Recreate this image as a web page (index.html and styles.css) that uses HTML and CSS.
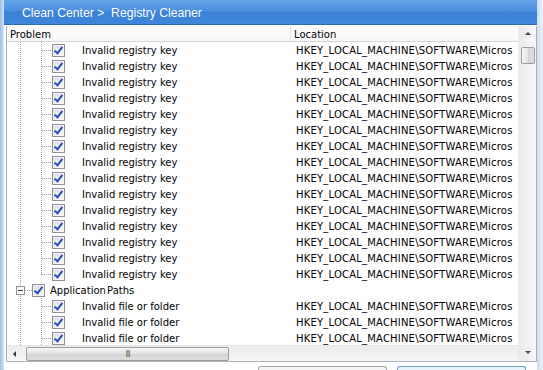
FILE: index.html
```html
<!DOCTYPE html>
<html lang="en">
<head>
    <meta charset="UTF-8">
    <title>Clean Center | Registry Cleaner</title>
    <link rel="stylesheet" href="styles.css">
</head>
<body>
    <div class="screen">
        <div class="edge-left"></div>

        <div class="window">
            <div class="title-bar">Clean Center &gt;&nbsp; Registry Cleaner</div>

            <div class="list-box">
                <div class="list-main">
                    <div class="list-header">
                        <div class="col-problem">Problem</div>
                        <div class="col-location">Location</div>
                    </div>

                    <div class="rows">
                        <div class="row"><div class="tree"><span class="check"></span></div><div class="problem">Invalid registry key</div><div class="location">HKEY_LOCAL_MACHINE\SOFTWARE\Micros</div></div>
                        <div class="row"><div class="tree"><span class="check"></span></div><div class="problem">Invalid registry key</div><div class="location">HKEY_LOCAL_MACHINE\SOFTWARE\Micros</div></div>
                        <div class="row"><div class="tree"><span class="check"></span></div><div class="problem">Invalid registry key</div><div class="location">HKEY_LOCAL_MACHINE\SOFTWARE\Micros</div></div>
                        <div class="row"><div class="tree"><span class="check"></span></div><div class="problem">Invalid registry key</div><div class="location">HKEY_LOCAL_MACHINE\SOFTWARE\Micros</div></div>
                        <div class="row"><div class="tree"><span class="check"></span></div><div class="problem">Invalid registry key</div><div class="location">HKEY_LOCAL_MACHINE\SOFTWARE\Micros</div></div>
                        <div class="row"><div class="tree"><span class="check"></span></div><div class="problem">Invalid registry key</div><div class="location">HKEY_LOCAL_MACHINE\SOFTWARE\Micros</div></div>
                        <div class="row"><div class="tree"><span class="check"></span></div><div class="problem">Invalid registry key</div><div class="location">HKEY_LOCAL_MACHINE\SOFTWARE\Micros</div></div>
                        <div class="row"><div class="tree"><span class="check"></span></div><div class="problem">Invalid registry key</div><div class="location">HKEY_LOCAL_MACHINE\SOFTWARE\Micros</div></div>
                        <div class="row"><div class="tree"><span class="check"></span></div><div class="problem">Invalid registry key</div><div class="location">HKEY_LOCAL_MACHINE\SOFTWARE\Micros</div></div>
                        <div class="row"><div class="tree"><span class="check"></span></div><div class="problem">Invalid registry key</div><div class="location">HKEY_LOCAL_MACHINE\SOFTWARE\Micros</div></div>
                        <div class="row"><div class="tree"><span class="check"></span></div><div class="problem">Invalid registry key</div><div class="location">HKEY_LOCAL_MACHINE\SOFTWARE\Micros</div></div>
                        <div class="row"><div class="tree"><span class="check"></span></div><div class="problem">Invalid registry key</div><div class="location">HKEY_LOCAL_MACHINE\SOFTWARE\Micros</div></div>
                        <div class="row"><div class="tree"><span class="check"></span></div><div class="problem">Invalid registry key</div><div class="location">HKEY_LOCAL_MACHINE\SOFTWARE\Micros</div></div>
                        <div class="row"><div class="tree"><span class="check"></span></div><div class="problem">Invalid registry key</div><div class="location">HKEY_LOCAL_MACHINE\SOFTWARE\Micros</div></div>
                        <div class="row last"><div class="tree"><span class="check"></span></div><div class="problem">Invalid registry key</div><div class="location">HKEY_LOCAL_MACHINE\SOFTWARE\Micros</div></div>

                        <div class="row group"><div class="tree"><span class="toggle"></span><span class="check"></span></div><div class="problem">Application Paths</div><div class="location"></div></div>

                        <div class="row"><div class="tree"><span class="check"></span></div><div class="problem">Invalid file or folder</div><div class="location">HKEY_LOCAL_MACHINE\SOFTWARE\Micros</div></div>
                        <div class="row"><div class="tree"><span class="check"></span></div><div class="problem">Invalid file or folder</div><div class="location">HKEY_LOCAL_MACHINE\SOFTWARE\Micros</div></div>
                        <div class="row"><div class="tree"><span class="check"></span></div><div class="problem">Invalid file or folder</div><div class="location">HKEY_LOCAL_MACHINE\SOFTWARE\Micros</div></div>
                    </div>

                    <div class="hscroll">
                        <span class="arrow-left"></span>
                        <div class="hthumb">III</div>
                    </div>
                </div>

                <div class="vscroll">
                    <span class="arrow-up"></span>
                    <div class="vthumb"></div>
                    <div class="vtrack"></div>
                    <span class="arrow-down"></span>
                </div>
            </div>

            <div class="buttons">
                <span class="btn"></span>
                <span class="btn btn-main"></span>
            </div>
        </div>

        <div class="edge-right"></div>
    </div>
</body>
</html>
```

FILE: styles.css
```css
body {
    margin: 0;
    background: #fff;
    font-family: "DejaVu Sans", Verdana, sans-serif;
    font-size: 10px;
    color: #000;
    overflow: hidden;
}

.screen {
    display: flex;
    height: 370px;
    overflow: hidden;
}

.edge-left {
    width: 4px;
    background: linear-gradient(to right, #9dbde4, #d4e4f5);
}

.edge-right {
    flex: 1;
    background: linear-gradient(to right, #c9dcf1, #eef4fb);
}

.window {
    width: 533px;
    height: 370px;
    overflow: hidden;
    display: flex;
    flex-direction: column;
    background: #fff;
}

.title-bar {
    height: 25px;
    line-height: 27px;
    padding-left: 18px;
    font-family: "Liberation Sans", Arial, sans-serif;
    font-size: 12.2px;
    color: #fff;
    background: linear-gradient(#66a6ea, #4a8fe0 45%, #3a80d6 50%, #3f86da);
    border-bottom: 1px solid #2f6cb8;
    box-sizing: border-box;
    flex-shrink: 0;
}

/* list with its scrollbars */
.list-box {
    display: flex;
    height: 336px;
    flex-shrink: 0;
    margin: 1px 0 0 2px;
    border: 1px solid #a9b4c0;
    border-top: none;
    box-sizing: border-box;
}

.list-main {
    flex: 1;
    min-width: 0;
    display: flex;
    flex-direction: column;
}

.list-header {
    display: grid;
    grid-template-columns: 284px 1fr;
    height: 16px;
    line-height: 17px;
    background: linear-gradient(#fff, #f6f7f8);
    border-bottom: 1px solid #d5d5d5;
    box-sizing: border-box;
}

.col-problem {
    padding-left: 3px;
    border-right: 1px solid #e2e3e5;
}

.col-location {
    padding-left: 3px;
}

.rows {
    flex: 1;
    overflow: hidden;
}

.row {
    --dv: repeating-linear-gradient(to bottom, #9a9a9a 0 1px, transparent 1px 2px);
    --dh: repeating-linear-gradient(to right, #9a9a9a 0 1px, transparent 1px 2px);
    display: grid;
    grid-template-columns: auto 1fr auto;
    grid-template-rows: 16px;
    height: 16px;
    line-height: 18px;
    white-space: nowrap;
}

.row .tree {
    display: flex;
    align-items: center;
    width: 75px;
    height: 16px;
    padding-left: 45px;
    box-sizing: border-box;
    background-image: var(--dv), var(--dv), var(--dh);
    background-position: 13px 0, 34px 0, 35px 8px;
    background-size: 1px 16px, 1px 16px, 10px 1px;
    background-repeat: no-repeat;
}

.row.last .tree {
    background-size: 1px 16px, 1px 9px, 10px 1px;
}

.row.group .tree {
    width: 43px;
    padding-left: 9px;
    background-image: var(--dv), var(--dh);
    background-position: 13px 0, 18px 8px;
    background-size: 1px 16px, 7px 1px;
}

.row.group .problem {
    width: 234px;
    word-spacing: -2px;
}

.problem {
    width: 209px;
    overflow: hidden;
}

.location {
    width: 222px;
    padding-left: 5px;
    letter-spacing: 0.2px;
}

.toggle {
    position: relative;
    width: 9px;
    height: 9px;
    margin-right: 7px;
    border: 1px solid #919191;
    background: linear-gradient(135deg, #f2f2f2, #fff);
    box-sizing: border-box;
}

.toggle::after {
    content: "";
    position: absolute;
    left: 1px;
    top: 3px;
    width: 5px;
    height: 1px;
    background: #444;
}

.check {
    position: relative;
    width: 13px;
    height: 13px;
    border: 1px solid #8e8f8f;
    background: linear-gradient(135deg, #dadada, #fbfbfb);
    box-shadow: inset 0 0 0 1px #f4f4f4;
    box-sizing: border-box;
}

.check::after {
    content: "";
    position: absolute;
    left: 3px;
    top: 0px;
    width: 3px;
    height: 7px;
    border: solid #2d4fbd;
    border-width: 0 2px 2px 0;
    transform: rotate(38deg);
}

.group .check {
    margin-right: 5px;
}

/* scrollbars */
.hscroll {
    display: flex;
    align-items: center;
    height: 16px;
    flex-shrink: 0;
    background: linear-gradient(#ececec, #f6f6f6);
    border-top: 1px solid #e6e6e6;
    box-sizing: border-box;
}

.arrow-left {
    width: 0;
    height: 0;
    margin: 0 10px 0 6px;
    border-top: 3px solid transparent;
    border-bottom: 3px solid transparent;
    border-right: 3px solid #333;
}

.hthumb {
    width: 203px;
    height: 14px;
    line-height: 13px;
    text-align: center;
    font-size: 8px;
    color: #666;
    letter-spacing: -1px;
    border: 1px solid #9c9c9c;
    border-radius: 2px;
    background: linear-gradient(#f8f8f8, #e2e2e2 50%, #d4d4d4 51%, #dedede);
    box-sizing: border-box;
}

.vscroll {
    width: 17px;
    display: flex;
    flex-direction: column;
    align-items: center;
    background: linear-gradient(to right, #eaeaea, #f7f7f7);
    border-left: 1px solid #ececec;
}

.arrow-up,
.arrow-down {
    width: 0;
    height: 0;
    border-left: 3px solid transparent;
    border-right: 3px solid transparent;
}

.arrow-up {
    margin: 6px 0 12px;
    border-bottom: 3px solid #444;
}

.arrow-down {
    margin: 6px 0 7px;
    border-top: 3px solid #444;
}

.vthumb {
    width: 14px;
    height: 17px;
    border: 1px solid #9c9c9c;
    border-radius: 2px;
    background: linear-gradient(to right, #f6f6f6, #e4e4e4 50%, #d6d6d6 51%, #e0e0e0);
    box-sizing: border-box;
}

.vtrack {
    flex: 1;
}

/* tops of the buttons under the list, cut off by the window */
.buttons {
    display: flex;
    gap: 10px;
    padding: 4px 0 0 254px;
}

.btn {
    width: 127px;
    height: 12px;
    border: 1px solid #a3a3a3;
    border-bottom: none;
    border-radius: 3px 3px 0 0;
    background: linear-gradient(#f6f6f6, #ececec);
}

.btn-main {
    border-color: #6a9fd6;
    background: linear-gradient(#eaf4fd, #dcecfb);
}
```
